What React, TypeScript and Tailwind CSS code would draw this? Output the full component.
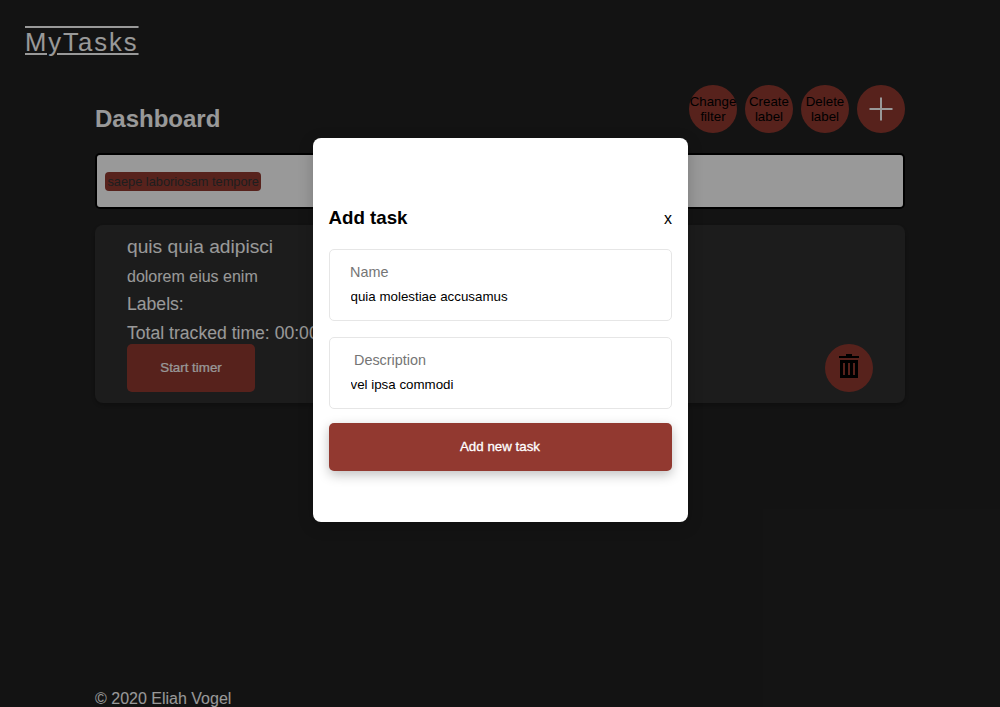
import React from "react";

function RoundButton({ children }: { children: React.ReactNode }) {
  return (
    <button className="flex size-12 shrink-0 items-center justify-center rounded-full bg-[#923930] text-center text-[13.333px] leading-[15px] text-black">
      {children}
    </button>
  );
}

function TrashIcon() {
  return (
    <svg viewBox="0 0 20 24" className="h-6 w-5" fill="black" shapeRendering="crispEdges">
      <path d="M7 0h6v2h7v2H0V2h7z" />
      <path fillRule="evenodd" d="M1 6h18v18H1zM4 9v12h2V9zM9 9v12h2V9zM14 9v12h2V9z" />
    </svg>
  );
}

function PlusIcon() {
  return (
    <svg viewBox="0 0 24 24" className="size-6" fill="white">
      <path d="M11 0.5h2V11h10.5v2H13v10.5h-2V13H0.5v-2H11z" />
    </svg>
  );
}

function Field({ label, value, inset }: { label: string; value: string; inset?: boolean }) {
  return (
    <label className="flex h-18 flex-col rounded-[5px] border border-[#e6e6e6] px-5 pt-3">
      <span className={inset ? "pl-1 text-[14.4px] leading-5 text-[#757575]" : "text-[14.4px] leading-5 text-[#757575]"}>
        {label}
      </span>
      <input
        className="mt-[7px] h-[15px] w-full bg-transparent pl-[0.5px] text-[13.333px] leading-[15px] text-black outline-none"
        defaultValue={value}
      />
    </label>
  );
}

function TaskCard() {
  return (
    <article className="mt-4 flex h-[178px] flex-col rounded-lg bg-[#2f2f2f] px-8 pt-[11px] shadow-[0_2px_6px_rgba(0,0,0,0.3)]">
      <h2 className="text-[19.2px] leading-[22px]">quis quia adipisci</h2>
      <p className="mt-[10px] text-base leading-[18px]">dolorem eius enim</p>
      <p className="mt-[8px] text-[17.6px] leading-5">Labels:</p>
      <p className="mt-[9px] text-[17.6px] leading-5">Total tracked time: 00:00:00</p>
      <div className="mt-px flex justify-between">
        <button className="h-12 w-32 rounded-[5px] bg-[#923930] pb-0.5 text-[13.333px] leading-[15px] [-webkit-text-stroke:0.2px_white]">Start timer</button>
        <RoundButton>
          <span className="-mt-1">
            <TrashIcon />
          </span>
        </RoundButton>
      </div>
    </article>
  );
}

export default function App() {
  return (
    <div className="relative h-[707px] w-full overflow-hidden bg-[#212121] font-['Liberation_Sans',Arial,sans-serif] text-white">
      <div className="flex h-full flex-col">
        <header className="h-[85px] pt-[28px] pl-[25px]">
          <a className="inline-block text-[25.6px] leading-[29px] tracking-[2px] decoration-2 underline-offset-[2px] [text-decoration-line:underline_overline]">
            MyTasks
          </a>
        </header>
        <main className="mx-auto w-[810px] grow">
          <div className="flex h-[68px] justify-between">
            <h1 className="pt-5 text-2xl leading-[27px] font-bold">Dashboard</h1>
            <div className="flex gap-2">
              <RoundButton>Change filter</RoundButton>
              <RoundButton>Create label</RoundButton>
              <RoundButton>Delete label</RoundButton>
              <RoundButton>
                <PlusIcon />
              </RoundButton>
            </div>
          </div>
          <div className="flex h-14 items-center rounded-[5px] border-2 border-black bg-white px-2">
            <span className="h-[19px] rounded-[4px] bg-[#923930] px-[2.4px] text-[12.8px] leading-[19px] text-[#333333]">
              saepe laboriosam tempore
            </span>
          </div>
          <TaskCard />
        </main>
        <footer className="mx-auto h-[17px] w-[810px] text-base leading-[18px]">© 2020 Eliah Vogel</footer>
      </div>

      <div className="absolute inset-0 flex items-start justify-center bg-black/40 pt-[138px] pl-px">
        <section className="h-96 w-[375px] rounded-lg bg-white px-4 pt-[69px] text-black shadow-[0_4px_16px_rgba(0,0,0,0.2)]">
          <div className="flex h-[42px] justify-between">
            <h3 className="-ml-[0.5px] text-[18.72px] leading-[22px] font-bold">Add task</h3>
            <button className="h-[22px] pt-px text-base leading-[22px]">x</button>
          </div>
          <div className="flex flex-col gap-4">
            <Field label="Name" value="quia molestiae accusamus" />
            <Field label="Description" value="vel ipsa commodi" inset />
          </div>
          <button className="mt-3.5 h-12 w-full rounded-[5px] bg-[#923930] pr-px pb-0.5 text-[13.333px] leading-[15px] text-white shadow-[0_4px_12px_rgba(0,0,0,0.25)] [-webkit-text-stroke:0.3px_white]">
            Add new task
          </button>
        </section>
      </div>
    </div>
  );
}
